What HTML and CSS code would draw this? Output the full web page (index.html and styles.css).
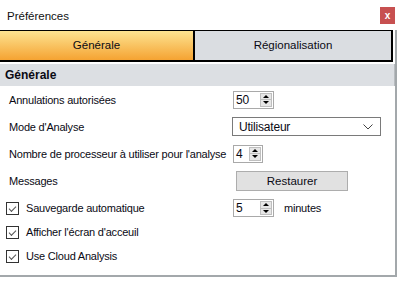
FILE: index.html
```html
<!DOCTYPE html>
<html lang="fr">
<head>
  <meta charset="UTF-8" />
  <title>Préférences</title>
  <link rel="stylesheet" href="styles.css">
</head>
<body>
  <div class="titlebar">
    <span class="title">Préférences</span>
    <span class="close">x</span>
  </div>

  <div class="panel">
    <div class="tabs">
      <div class="tab active">Générale</div>
      <div class="tab">Régionalisation</div>
    </div>

    <div class="section">Générale</div>

    <div class="row">
      <span class="label">Annulations autorisées</span>
      <div class="spin wide"><span class="val">50</span><span class="arrows"><i class="up"></i><i class="down"></i></span></div>
    </div>

    <div class="row">
      <span class="label">Mode d'Analyse</span>
      <div class="combo">
        <span>Utilisateur</span>
        <svg width="10" height="6" viewBox="0 0 10 6"><path d="M0.5 0.5 L5 5 L9.5 0.5" fill="none" stroke="#444" stroke-width="1"/></svg>
      </div>
    </div>

    <div class="row">
      <span class="label">Nombre de processeur à utiliser pour l'analyse</span>
      <div class="spin narrow"><span class="val">4</span><span class="arrows"><i class="up"></i><i class="down"></i></span></div>
    </div>

    <div class="row">
      <span class="label">Messages</span>
      <button class="btn">Restaurer</button>
    </div>

    <div class="checks">
      <div class="row check">
        <label class="label"><span class="box"></span>Sauvegarde automatique</label>
        <div class="spin wide"><span class="val">5</span><span class="arrows"><i class="up"></i><i class="down"></i></span></div>
        <span class="unit">minutes</span>
      </div>
      <div class="row check">
        <label class="label"><span class="box"></span>Afficher l'écran d'acceuil</label>
      </div>
      <div class="row check">
        <label class="label"><span class="box"></span>Use Cloud Analysis</label>
      </div>
    </div>
  </div>
</body>
</html>
```

FILE: styles.css
```css
body {
  margin: 0;
  background: #fff;
  font-family: "Liberation Sans", Arial, sans-serif;
  font-size: 11px;
  letter-spacing: -0.2px;
  color: #0a0a14;
}

.titlebar {
  height: 30px;
  display: flex;
  align-items: center;
  justify-content: space-between;
  padding: 0 4px 0 7px;
}

.title {
  font-size: 11.5px;
  letter-spacing: 0;
  color: #111;
  padding-top: 2px;
}

.close {
  width: 15px;
  height: 17px;
  background: #c75050;
  color: #fff;
  font-weight: bold;
  font-size: 10px;
  display: flex;
  align-items: center;
  justify-content: center;
}

.panel {
  width: 395px;
  border-right: 2px solid #a3a8ab;
  border-bottom: 2px solid #a3a8ab;
  padding-bottom: 7px;
}

.tabs {
  display: flex;
  width: 393px;
  height: 29px;
  border-top: 1px solid #000;
  border-bottom: 2px solid #000;
}

.tab {
  flex: 1;
  display: flex;
  align-items: center;
  justify-content: center;
  background: #dadde1;
  border-right: 2px solid #000;
  padding-bottom: 1px;
  font-size: 11.5px;
  letter-spacing: 0;
}

.tab.active {
  flex: 0 0 195px;
  box-sizing: border-box;
  background: linear-gradient(#fde391, #f5a332);
}

.section {
  margin-top: 2px;
  height: 22px;
  display: flex;
  align-items: center;
  padding-left: 5px;
  background: #dcdfe3;
  border-right: 1px solid #b8bcc0;
  font-weight: bold;
  font-size: 12px;
  letter-spacing: 0;
}

.row {
  height: 27px;
  display: flex;
  align-items: center;
}

.label {
  width: 224px;
  padding-left: 9px;
  white-space: nowrap;
  display: flex;
  align-items: center;
}

.checks {
  margin-top: 2px;
}

.row.check {
  height: 24px;
}

.check .label {
  padding-left: 6px;
  width: 227px;
}

.box {
  width: 11px;
  height: 11px;
  border: 1px solid #333;
  margin-right: 7px;
  position: relative;
}

.box::after {
  content: "";
  position: absolute;
  left: 2px;
  top: 1px;
  width: 6px;
  height: 3px;
  border-left: 1px solid #555;
  border-bottom: 1px solid #555;
  transform: translate(0, 2px) rotate(-45deg);
}

.spin {
  height: 16px;
  border: 1px solid #a9a9a9;
  background: #fff;
  display: flex;
  justify-content: space-between;
  align-items: center;
}

.spin.wide { width: 39px; }
.spin.narrow { width: 28px; }

.val {
  padding-left: 2px;
  font-size: 12px;
  line-height: 16px;
}

.arrows {
  width: 12px;
  height: 14px;
  margin-right: 1px;
  display: flex;
  flex-direction: column;
  background: #e6e6e6;
  border: 1px solid #bfbfbf;
  box-sizing: border-box;
}

.arrows i {
  flex: 1;
  display: flex;
  align-items: center;
  justify-content: center;
}

.arrows i::before {
  content: "";
  border-left: 3px solid transparent;
  border-right: 3px solid transparent;
}

.arrows .up {
  border-bottom: 1px solid #bfbfbf;
}

.arrows .up::before { border-bottom: 3px solid #000; }
.arrows .down::before { border-top: 3px solid #000; }

.combo {
  width: 134px;
  height: 17px;
  border: 1px solid #7a7a7a;
  display: flex;
  align-items: center;
  justify-content: space-between;
  padding: 0 7px 0 6px;
  margin-left: -1px;
  font-size: 12px;
}

.btn {
  width: 112px;
  height: 20px;
  margin-left: 3px;
  background: #e1e1e1;
  border: 1px solid #adadad;
  font-family: inherit;
  font-size: 11.5px;
  color: #0a0a14;
  padding: 0;
}

.unit {
  margin-left: 10px;
}
```
